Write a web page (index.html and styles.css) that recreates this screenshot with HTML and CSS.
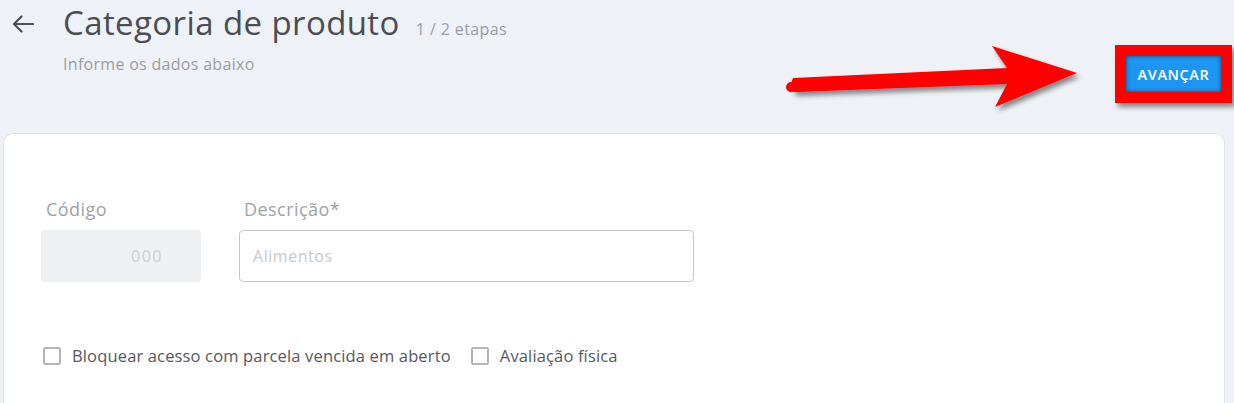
FILE: index.html
```html
<!DOCTYPE html>
<html lang="pt-BR">
<head>
<meta charset="utf-8">
<title>Categoria de produto</title>
<link rel="stylesheet" href="styles.css">
</head>
<body>
<div class="page">
  <header class="header">
    <div class="head-left">
      <button class="back" aria-label="Voltar">
        <svg width="22" height="18" viewBox="0 0 22 18"><path d="M21 9H2.5M9.5 1.5L2 9l7.5 7.5" fill="none" stroke="#4c4f55" stroke-width="2.2" stroke-linecap="round" stroke-linejoin="round"/></svg>
      </button>
      <div class="titles">
        <div class="title-row">
          <h1 class="title">Categoria de produto</h1>
          <span class="steps">1 / 2 etapas</span>
        </div>
        <p class="subtitle">Informe os dados abaixo</p>
      </div>
    </div>
    <div class="highlight">
      <button class="btn-next">AVANÇAR</button>
    </div>
    <svg class="annot-arrow" width="320" height="80" viewBox="0 0 320 80">
      <defs>
        <filter id="sh" x="-10%" y="-20%" width="130%" height="160%">
          <feDropShadow dx="3" dy="4" stdDeviation="2.5" flood-color="#000" flood-opacity="0.45"/>
        </filter>
      </defs>
      <polygon filter="url(#sh)" fill="#ff0000" points="6,37 8,32 222,22 207,0 292,27 210,61 222,38 10,46 6,42"/>
      <line x1="6" y1="41" x2="222" y2="31" stroke="#ff0000" stroke-width="10" stroke-linecap="round"/>
    </svg>
  </header>

  <main class="card">
    <div class="fields">
      <div class="field field-code">
        <label class="label">Código</label>
        <div class="input input-disabled">000</div>
      </div>
      <div class="field field-desc">
        <label class="label">Descrição*</label>
        <div class="input input-text"><span class="placeholder">Alimentos</span></div>
      </div>
    </div>
    <div class="checks">
      <label class="check"><span class="box"></span>Bloquear acesso com parcela vencida em aberto</label>
      <label class="check"><span class="box"></span>Avaliação física</label>
    </div>
  </main>
</div>
</body>
</html>
```

FILE: styles.css
```css
* { box-sizing: border-box; }
html, body { margin: 0; padding: 0; }
body {
  background: #eef1f5;
  font-family: "Open Sans", "Lato", sans-serif;
  color: #4a4d54;
  overflow: hidden;
}
.page {
  width: 1234px;
  height: 403px;
  padding: 0 9px 0 3px;
  display: flex;
  flex-direction: column;
}
.header {
  position: relative;
  height: 133px;
  display: flex;
  justify-content: space-between;
  align-items: flex-start;
}
.head-left {
  display: flex;
  align-items: flex-start;
  padding-left: 8px;
}
.back {
  background: none;
  border: 0;
  padding: 0;
  margin-top: 15px;
  width: 24px;
  height: 20px;
  cursor: pointer;
}
.titles {
  margin-left: 28px;
  padding-top: 2px;
}
.title-row {
  display: flex;
  align-items: baseline;
  gap: 16px;
}
.title {
  margin: 0;
  font-size: 33px;
  font-weight: 400;
  letter-spacing: 0.4px;
  color: #4a4d54;
  line-height: 42px;
}
.steps {
  font-size: 16px;
  letter-spacing: 0.4px;
  color: #9b9da2;
}
.subtitle {
  margin: 9px 0 0;
  font-size: 16px;
  letter-spacing: 0.3px;
  color: #9b9da2;
}
.highlight {
  margin-top: 45px;
  margin-right: -7px;
  background: #ff0000;
  padding: 11px;
  box-shadow: 3px 4px 5px rgba(0,0,0,0.45);
}
.btn-next {
  display: block;
  width: 95px;
  height: 36px;
  border: 0;
  background: #1d96f3;
  color: #fff;
  font-family: "Open Sans", "Lato", sans-serif;
  font-size: 14.5px;
  letter-spacing: 0.6px;
  font-weight: 600;
  box-shadow: inset 0 0 4px rgba(0,0,0,0.55);
  padding: 0;
}
.annot-arrow {
  position: absolute;
  left: 782px;
  top: 46px;
}
.card {
  flex: 1;
  background: #fff;
  border: 1px solid #dfe2e8;
  border-bottom: 0;
  border-radius: 10px 10px 0 0;
  padding: 63px 0 0 37px;
}
.fields {
  display: flex;
  gap: 38px;
}
.field {
  display: flex;
  flex-direction: column;
}
.label {
  font-size: 18px;
  letter-spacing: 0.45px;
  color: #9ea2a8;
  padding-left: 5px;
  line-height: 24px;
  margin-bottom: 9px;
}
.input {
  height: 52px;
  border-radius: 4px;
  font-size: 16px;
  display: flex;
  align-items: center;
}
.input-disabled {
  width: 160px;
  background: #eef0f4;
  color: #cbced3;
  letter-spacing: 1.5px;
  justify-content: flex-end;
  padding-right: 38px;
}
.input-text {
  width: 455px;
  border: 1px solid #c4c6ca;
  padding-left: 13px;
}
.placeholder { color: #c6c8cc; letter-spacing: 0.55px; }
.checks {
  display: flex;
  gap: 20px;
  margin-top: 62px;
  padding-left: 2px;
}
.check {
  display: flex;
  align-items: center;
  gap: 11px;
  font-size: 16.5px;
  letter-spacing: 0.15px;
  color: #55585e;
}
.box {
  width: 18px;
  height: 18px;
  border: 2px solid #b4b6ba;
  border-radius: 2px;
  background: #fff;
}
```
